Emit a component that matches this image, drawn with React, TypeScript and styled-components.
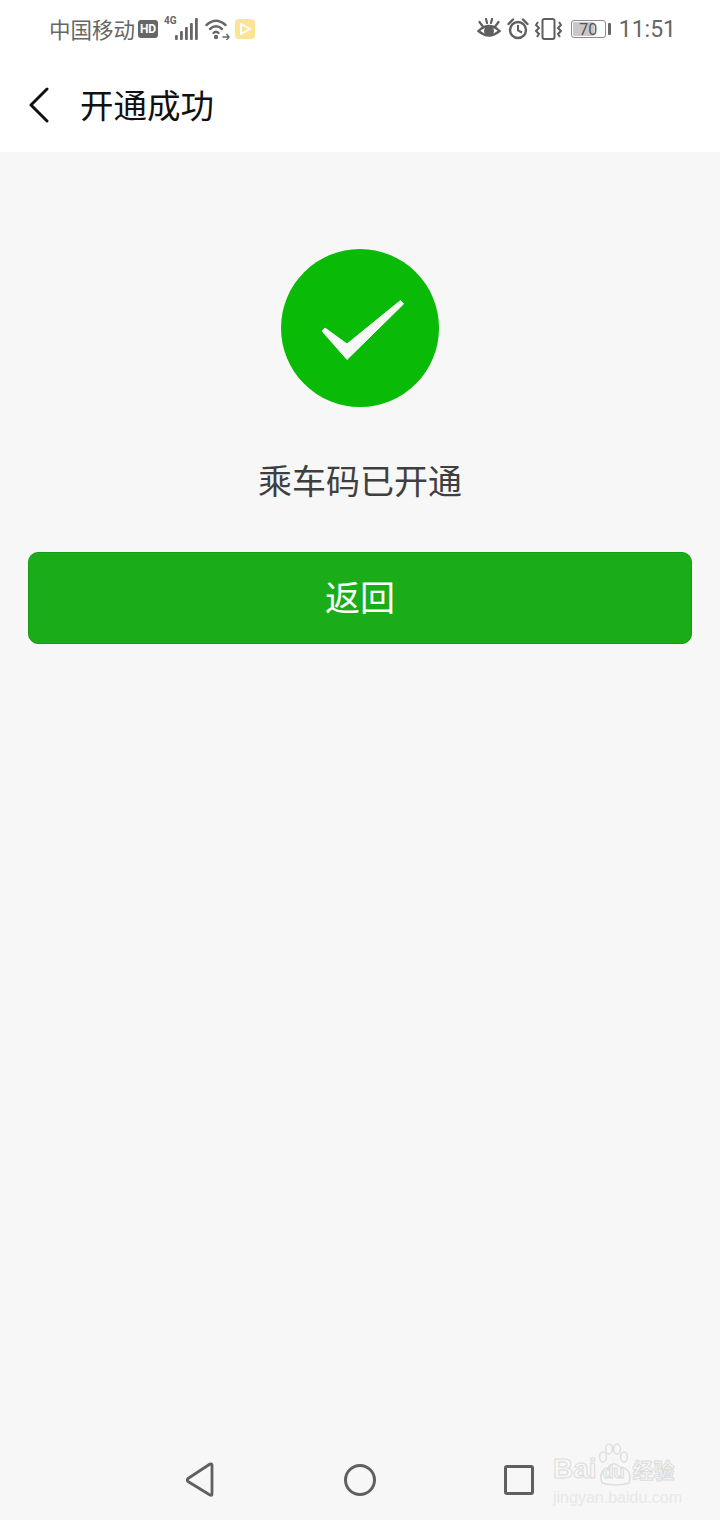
import React from 'react';
import styled, { createGlobalStyle } from 'styled-components';

const CJK = `'Noto Sans CJK SC', 'Roboto', sans-serif`;

const GlobalStyle = createGlobalStyle`
  html, body {
    margin: 0;
    padding: 0;
    background: #f7f7f7;
  }
`;

const App = () => {
  return (
    <Page>
      <GlobalStyle />
      <Header>
        <StatusBar>
          <StatusGroup>
            <Carrier>中国移动</Carrier>
            <HdBadge>HD</HdBadge>
            <SignalIcon />
            <WifiIcon />
            <PlayBadge>
              <svg width="20" height="20" viewBox="0 0 20 20" fill="none">
                <path d="M6 5 L15 10 L6 15 Z" stroke="#fff" strokeWidth="2" strokeLinejoin="round" />
              </svg>
            </PlayBadge>
          </StatusGroup>
          <StatusGroup>
            <EyeIcon />
            <AlarmIcon />
            <VibrateIcon />
            <Battery>
              <BatteryFill />
              <BatteryLabel>70</BatteryLabel>
            </Battery>
            <BatteryCap />
            <Clock>11:51</Clock>
          </StatusGroup>
        </StatusBar>
        <NavBar>
          <svg width="22" height="36" viewBox="0 0 22 36" fill="none">
            <path d="M19 2 L3 18 L19 34" stroke="#111" strokeWidth="3" strokeLinecap="round" strokeLinejoin="round" />
          </svg>
          <NavTitle>开通成功</NavTitle>
        </NavBar>
      </Header>

      <Content>
        <SuccessCircle>
          <svg width="158" height="158" viewBox="0 0 158 158">
            <polygon
              points="41,82 44,79 66,95 119.5,51.5 122.5,55 66,110.5"
              fill="#f7f7f7"
              stroke="#f7f7f7"
              strokeWidth="1"
              strokeLinejoin="round"
            />
          </svg>
        </SuccessCircle>
        <Message>乘车码已开通</Message>
        <BackButton type="button">返回</BackButton>
      </Content>

      <SystemNav>
        <svg width="32" height="36" viewBox="0 0 32 36" fill="none">
          <path d="M28 3 L28 32 Q28 34 26 33 L4 19.5 Q2.5 18 4 16.5 L26 2 Q28 1.5 28 3 Z" stroke="#606060" strokeWidth="2.8" strokeLinejoin="round" />
        </svg>
        <HomeButton />
        <RecentButton />
      </SystemNav>

      <Watermark>
        <svg width="40" height="46" viewBox="0 0 40 46" fill="none">
          <g stroke="#dedede" strokeWidth="1.5">
            <ellipse cx="6" cy="14" rx="3.4" ry="5" />
            <ellipse cx="12" cy="6" rx="3.4" ry="5" />
            <ellipse cx="20" cy="6" rx="3.4" ry="5" />
            <ellipse cx="27" cy="14" rx="3.4" ry="5" />
            <path d="M5 40 Q1 28 11 25 Q16 17 23 24 Q36 26 32 40 Q18 44 5 40 Z" />
          </g>
        </svg>
        <WatermarkMain>
          <WatermarkBrand>Bai</WatermarkBrand>
          <WatermarkDu>du</WatermarkDu>
          <WatermarkCn>经验</WatermarkCn>
        </WatermarkMain>
        <WatermarkUrl>jingyan.baidu.com</WatermarkUrl>
      </Watermark>
    </Page>
  );
};

const SignalIcon = () => (
  <svg width="34" height="26" viewBox="0 0 34 26" fill="none" style={{ marginLeft: 6 }}>
    <text x="0" y="8" fontSize="10" fontWeight="700" fill="#666" fontFamily="Roboto, sans-serif">4G</text>
    <g fill="#666">
      <rect x="11" y="19" width="2.8" height="5" rx="1" />
      <rect x="16" y="15" width="2.8" height="9" rx="1" />
      <rect x="21" y="11" width="2.8" height="13" rx="1" />
      <rect x="26" y="7" width="2.8" height="17" rx="1" />
      <rect x="31" y="2" width="2.8" height="22" rx="1" />
    </g>
  </svg>
);

const WifiIcon = () => (
  <svg width="25" height="22" viewBox="0 0 25 22" fill="none" style={{ marginLeft: 7 }}>
    <g stroke="#666" strokeWidth="2.4" strokeLinecap="round">
      <path d="M1.5 7 Q11 -1.5 20.5 7" />
      <path d="M5 11 Q11 5.5 17 11" />
      <path d="M8.5 15 Q11 12.5 13.5 15" />
    </g>
    <circle cx="11" cy="19" r="2.2" fill="#666" />
    <path d="M17.5 19 H24 M21.5 16 L24 19 L21.5 22" stroke="#666" strokeWidth="1.4" />
  </svg>
);

const EyeIcon = () => (
  <svg width="24" height="22" viewBox="0 0 24 22" fill="none">
    <path d="M1.5 13 Q12 3 22.5 13 Q12 22 1.5 13 Z" stroke="#5f5f5f" strokeWidth="2.4" />
    <circle cx="12" cy="13" r="5" fill="#5f5f5f" />
    <path d="M2.5 4 L5.5 8 M9 1 L10 5 M15 1 L14 5 M21.5 4 L18.5 8" stroke="#5f5f5f" strokeWidth="2.2" strokeLinecap="round" />
  </svg>
);

const AlarmIcon = () => (
  <svg width="22" height="22" viewBox="0 0 22 22" fill="none" style={{ marginLeft: 6 }}>
    <circle cx="11" cy="12" r="8" stroke="#5f5f5f" strokeWidth="2.4" />
    <path d="M11 7 V12.5 L15 14.5" stroke="#5f5f5f" strokeWidth="2" />
    <path d="M1.5 6 L6 1.5 M16 1.5 L20.5 6" stroke="#5f5f5f" strokeWidth="2.4" strokeLinecap="round" />
  </svg>
);

const VibrateIcon = () => (
  <svg width="27" height="22" viewBox="0 0 27 22" fill="none" style={{ marginLeft: 6 }}>
    <rect x="7.5" y="1" width="12" height="20" rx="2" stroke="#5f5f5f" strokeWidth="2" />
    <path d="M3 4 L1 7 L4 10 L1 13 L4 16 L2 19 M24 4 L26 7 L23 10 L26 13 L23 16 L25 19" stroke="#5f5f5f" strokeWidth="2" />
  </svg>
);

const Page = styled.div`
  position: relative;
  display: flex;
  flex-direction: column;
  width: 720px;
  height: 1520px;
  overflow: hidden;
  background: #f7f7f7;
  font-family: ${CJK};
`;

const Header = styled.header`
  background: #fff;
  height: 152px;
  display: flex;
  flex-direction: column;
`;

const StatusBar = styled.div`
  height: 58px;
  display: flex;
  align-items: center;
  justify-content: space-between;
  padding: 0 44px 0 49px;
`;

const StatusGroup = styled.div`
  display: flex;
  align-items: center;
`;

const Carrier = styled.span`
  font-size: 21.5px;
  line-height: 28px;
  color: #666;
`;

const HdBadge = styled.span`
  width: 20px;
  height: 18px;
  margin-left: 3px;
  border-radius: 3px;
  background: #666;
  color: #fff;
  font-family: 'Roboto', sans-serif;
  font-size: 12px;
  font-weight: 700;
  line-height: 18px;
  text-align: center;
`;

const PlayBadge = styled.span`
  display: flex;
  width: 20px;
  height: 20px;
  margin-left: 5px;
  border-radius: 4px;
  background: #fbe594;
`;

const Battery = styled.div`
  position: relative;
  box-sizing: border-box;
  width: 35px;
  height: 18px;
  margin-left: 9px;
  border: 1px solid #8a8a8a;
  border-radius: 3px;
  padding: 1px;
`;

const BatteryFill = styled.div`
  width: 70%;
  height: 100%;
  background: #c8c8c8;
  border-radius: 1px;
`;

const BatteryLabel = styled.span`
  position: absolute;
  inset: 0;
  font-family: 'Roboto', sans-serif;
  font-size: 16px;
  line-height: 17px;
  text-align: center;
  color: #555;
`;

const BatteryCap = styled.div`
  width: 3px;
  height: 12px;
  margin-left: 2px;
  border-radius: 1px;
  background: #666;
`;

const Clock = styled.span`
  margin-left: 8px;
  padding-top: 2px;
  font-family: 'Roboto', sans-serif;
  font-size: 23px;
  line-height: 28px;
  color: #666;
`;

const NavBar = styled.div`
  flex: 1;
  display: flex;
  align-items: center;
  padding: 0 0 0 28px;
  gap: 30px;
`;

const NavTitle = styled.h1`
  margin: 0 0 3px;
  font-size: 33.5px;
  font-weight: 400;
  line-height: 48px;
  color: #111;
`;

const Content = styled.main`
  flex: 1;
  display: flex;
  flex-direction: column;
  align-items: center;
  padding: 97px 28px 0;
`;

const SuccessCircle = styled.div`
  width: 158px;
  height: 158px;
  border-radius: 50%;
  background: #09bb07;
`;

const Message = styled.p`
  margin: 48px 0 0;
  font-size: 34px;
  line-height: 50px;
  color: #3f3f3f;
`;

const BackButton = styled.button`
  width: 100%;
  height: 92px;
  margin-top: 47px;
  padding: 0 0 4px;
  border: 1px solid #179b16;
  border-radius: 10px;
  background: #1aad19;
  color: #fff;
  font-family: ${CJK};
  font-size: 35px;
  line-height: 50px;
`;

const SystemNav = styled.nav`
  display: flex;
  align-items: center;
  height: 80px;
  padding: 0 0 0 184px;
  gap: 128px;
`;

const HomeButton = styled.div`
  width: 32px;
  height: 32px;
  box-sizing: border-box;
  border: 3px solid #606060;
  border-radius: 50%;
`;

const RecentButton = styled.div`
  width: 30px;
  height: 30px;
  box-sizing: border-box;
  border: 3px solid #606060;
  border-radius: 3px;
`;

const Watermark = styled.div`
  position: absolute;
  left: 553px;
  top: 1442px;
  width: 130px;
  height: 66px;

  svg {
    position: absolute;
    left: 44px;
    top: 1px;
  }
`;

const WatermarkMain = styled.div`
  position: absolute;
  left: 0;
  top: 11px;
  display: flex;
  align-items: baseline;
  white-space: nowrap;
  color: #f7f7f7;
  -webkit-text-stroke: 1px #dcdcdc;
`;

const WatermarkBrand = styled.span`
  font-family: 'Liberation Sans', sans-serif;
  font-size: 28px;
  font-weight: 700;
`;

const WatermarkDu = styled.span`
  margin-left: 6px;
  font-family: 'Liberation Sans', sans-serif;
  font-size: 18px;
  font-weight: 700;
`;

const WatermarkCn = styled.span`
  margin-left: 8px;
  font-size: 21px;
  font-weight: 700;
`;

const WatermarkUrl = styled.div`
  position: absolute;
  left: 0;
  top: 47px;
  font-family: 'Liberation Sans', sans-serif;
  font-size: 16px;
  line-height: 18px;
  white-space: nowrap;
  color: #e8e8e8;
`;

export default App;
